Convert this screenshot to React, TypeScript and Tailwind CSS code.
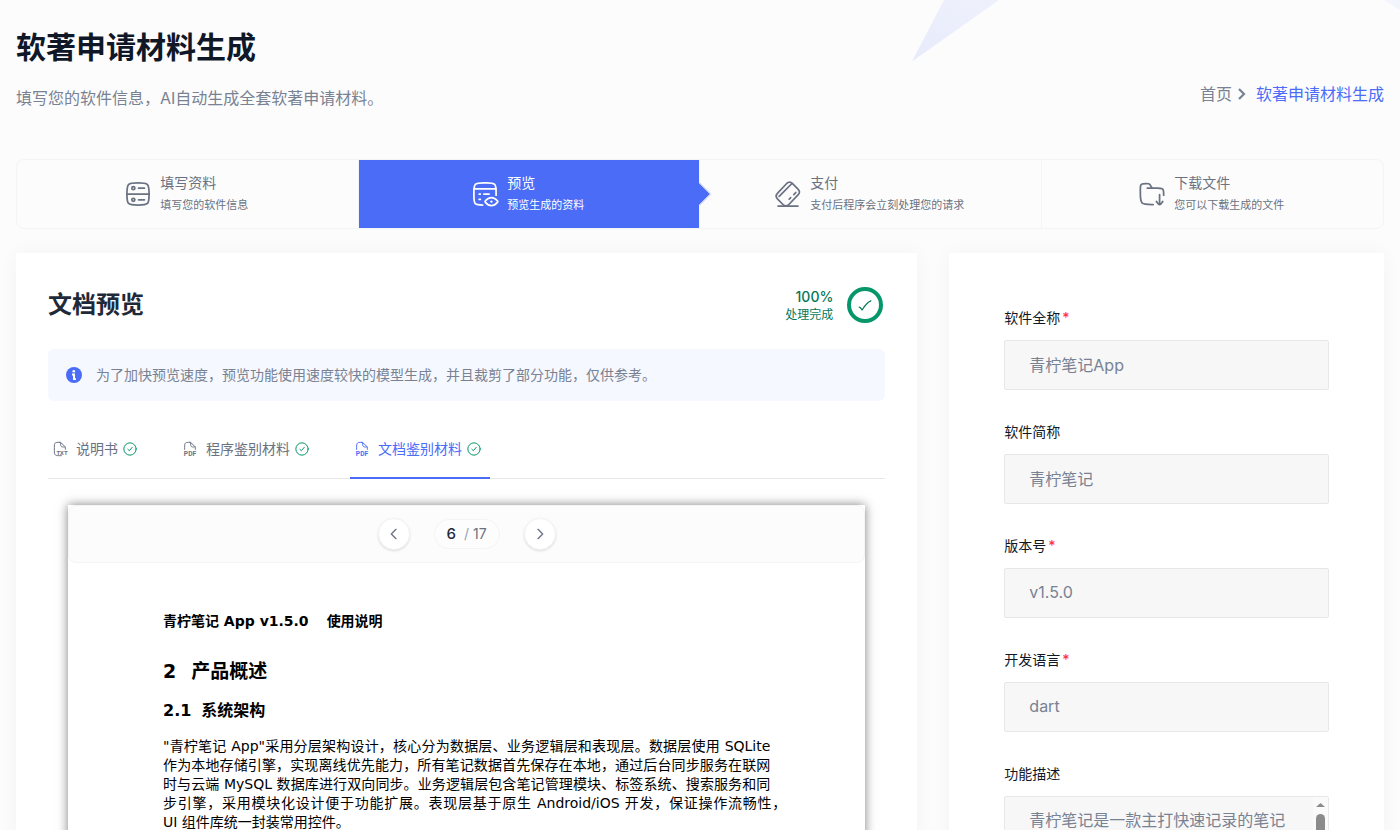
import type { ReactNode } from "react";
import clsx from "clsx";

interface IconProps {
  className?: string;
  children: ReactNode;
}

function Icon({ className, children }: IconProps) {
  return (
    <svg
      viewBox="0 0 24 24"
      fill="none"
      stroke="currentColor"
      strokeWidth="1.5"
      strokeLinecap="round"
      strokeLinejoin="round"
      aria-hidden="true"
      className={clsx("shrink-0", className)}
    >
      {children}
    </svg>
  );
}

const steps = [
  {
    title: "填写资料",
    desc: "填写您的软件信息",
    icon: (
      <>
        <path d="M2.5 12c0-4.478 0-6.718 1.391-8.109S7.521 2.5 12 2.5s6.718 0 8.109 1.391S21.5 7.521 21.5 12s0 6.718-1.391 8.109S16.479 21.5 12 21.5s-6.718 0-8.109-1.391S2.5 16.479 2.5 12Z" />
        <path d="M2.5 12h19M12.5 7h5M12.5 17h5" />
        <circle cx="8" cy="7" r="1.3" />
        <circle cx="8" cy="17" r="1.3" />
      </>
    ),
  },
  {
    title: "预览",
    desc: "预览生成的资料",
    active: true,
    icon: (
      <>
        <path d="M21.5 13v-2.5c0-3.771 0-5.657-1.245-6.828C19.009 2.5 17.005 2.5 12.997 2.5h-1.994c-4.008 0-6.012 0-7.258 1.172C2.5 4.843 2.5 6.729 2.5 10.5v3c0 3.771 0 5.657 1.245 6.828C4.64 21.17 5.9 21.43 10 21.48" />
        <path d="M2.5 7.5h19M11 12h4.5M7 12h1M7 16.5h1" />
        <path d="M22.6 17.8c.27.33.4.49.4.7s-.13.37-.4.7c-.93 1.16-2.72 2.8-5.1 2.8s-4.17-1.64-5.1-2.8c-.27-.33-.4-.49-.4-.7s.13-.37.4-.7c.93-1.16 2.72-2.8 5.1-2.8s4.17 1.64 5.1 2.8Z" />
        <path d="M17.5 18.5h.01" strokeWidth="2" />
      </>
    ),
  },
  {
    title: "支付",
    desc: "支付后程序会立刻处理您的请求",
    icon: (
      <>
        <path d="M10.7 3.2c1.6-1.6 3.6-1.7 5.2-.1l4.7 4.7c1.6 1.6 1.6 3.4 0 5l-7.9 8.2c-1.6 1.6-3.4 1.6-5 0l-4.6-4.7c-1.6-1.6-1.6-3.5 0-5.1Z" />
        <path d="m4.4 14 11-11M17 12.5l1.7-1.8M13 16.5l1.3-1.3M3.5 22.3h17" />
      </>
    ),
  },
  {
    title: "下载文件",
    desc: "您可以下载生成的文件",
    icon: (
      <>
        <path d="M13 21h-1c-4.714 0-7.071 0-8.536-1.465C2 18.072 2 15.715 2 11V7.944c0-1.816 0-2.724.38-3.406A3 3 0 0 1 3.538 3.38C4.22 3 5.128 3 6.944 3 8.108 3 8.69 3 9.2 3.191c1.163.436 1.643 1.493 2.168 2.542L12 7" />
        <path d="M8 7h8.75c2.107 0 3.16 0 3.917.506a3 3 0 0 1 .827.827C22 9.09 22 10.143 22 12.25V13" />
        <path d="M18.5 12.5V21m0 0c-.6 0-2.2-1.8-2.7-2.6M18.5 21c.6 0 2.2-1.8 2.7-2.6" />
      </>
    ),
  },
];

const tabs = [
  { label: "说明书", ext: "TXT" },
  { label: "程序鉴别材料", ext: "PDF" },
  { label: "文档鉴别材料", ext: "PDF", active: true },
];

const fields = [
  { id: "fullName", label: "软件全称", value: "青柠笔记App", required: true },
  { id: "shortName", label: "软件简称", value: "青柠笔记" },
  { id: "version", label: "版本号", value: "v1.5.0", required: true },
  { id: "language", label: "开发语言", value: "dart", required: true },
];

const description =
  "青柠笔记是一款主打快速记录的笔记应用，支持文字、图片与语音等多种记录方式。用户可以通过标签整理内容，使用全文搜索快速定位笔记，并在多台设备之间保持同步。应用采用离线优先设计，没有网络时也能正常查看和编辑，联网后自动完成数据合并。";

const paragraph = [
  "\"青柠笔记 App\"采用分层架构设计，核心分为数据层、业务逻辑层和表现层。数据层使用 SQLite",
  "作为本地存储引擎，实现离线优先能力，所有笔记数据首先保存在本地，通过后台同步服务在联网",
  "时与云端 MySQL 数据库进行双向同步。业务逻辑层包含笔记管理模块、标签系统、搜索服务和同",
];

function FileIcon({ ext }: { ext: string }) {
  return (
    <Icon className="size-4">
      {ext === "TXT" ? (
        <path d="M14 22h-2.3c-3.4 0-5.1 0-6.3-.9a4 4 0 0 1-.7-.7C3.5 19.2 3.5 17.6 3.5 14.5V10c0-3.8 0-5.7 1.2-6.8C5.8 2 7.7 2 11.5 2" />
      ) : (
        <path d="M4 12.5V9.456c0-3.245 0-4.868.886-5.967a4 4 0 0 1 .603-.603C6.588 2 8.211 2 11.456 2" />
      )}
      <path d="M11.456 2c.705 0 1.058 0 1.381.115.067.024.133.051.197.082.31.148.56.397 1.058.896l4.736 4.736c.579.578.868.867 1.02 1.234.152.368.152.777.152 1.594V12.5" />
      <path d="M13 2.5V3c0 2.828 0 4.243.879 5.121C14.757 9 16.172 9 19 9h.5" />
      <text
        x={ext === "TXT" ? 15 : 12}
        y={ext === "TXT" ? 20.5 : 22}
        textAnchor="middle"
        fontFamily="Roboto, sans-serif"
        fontSize={ext === "TXT" ? 9 : 10}
        fontWeight="700"
        fill="currentColor"
        stroke="none"
      >
        {ext}
      </text>
    </Icon>
  );
}

function StepBar() {
  return (
    <ol className="grid grid-cols-4 divide-x divide-gray-100 rounded-lg border border-gray-100">
      {steps.map((step) => (
        <li
          key={step.title}
          className={clsx(
            "relative flex h-[68px] items-center justify-center gap-2 pr-0.5",
            step.active ? "bg-[#4a6cf7] text-white" : "text-gray-500"
          )}
        >
          <Icon className="size-7">{step.icon}</Icon>
          <div className="pb-0.5">
            <p className="text-sm leading-6">{step.title}</p>
            <p className="text-[11px] leading-5">{step.desc}</p>
          </div>
          {step.active && (
            <span className="absolute top-1/2 -right-[9px] size-4 -translate-y-1/2 rotate-45 border-t border-r border-gray-100 bg-[#4a6cf7]" />
          )}
        </li>
      ))}
    </ol>
  );
}

function Tabs() {
  return (
    <div role="tablist" className="mt-6 flex gap-8 shadow-[inset_0_-1px_0_#e5e7eb]">
      {tabs.map((tab) => (
        <button
          key={tab.label}
          type="button"
          role="tab"
          aria-selected={!!tab.active}
          className={clsx(
            "border-b-2 pr-2 pb-1 pl-1 text-sm",
            tab.active ? "border-[#4a6cf7] text-[#4a6cf7]" : "border-transparent text-gray-500"
          )}
        >
          <span className="flex h-12 items-center">
            <FileIcon ext={tab.ext} />
            <span className="mr-1 ml-2">{tab.label}</span>
            <Icon className="size-4 text-[#059669]">
              <circle cx="12" cy="12" r="9.25" />
              <path d="M8.8 12.4l2.2 2.2 4.3-5" />
            </Icon>
          </span>
        </button>
      ))}
    </div>
  );
}

function DocumentPage() {
  return (
    <div className="mx-5 mt-[26px] bg-white shadow-[0_0_10px_rgba(0,0,0,0.5)]">
      <div className="flex h-[58px] items-center justify-center gap-6 rounded-lg border border-gray-100 bg-[#fcfcfc]">
        <button
          type="button"
          aria-label="上一页"
          className="flex size-8 items-center justify-center rounded-full border border-gray-100 bg-white text-gray-500 shadow-sm"
        >
          <Icon className="size-4">
            <path d="M15 5l-7 7 7 7" strokeWidth="2" />
          </Icon>
        </button>
        <div className="flex h-[30px] items-center rounded-full border border-gray-100 bg-[#fdfdfd] px-3 text-sm text-gray-500">
          <span className="text-[15px] font-medium text-gray-800">6</span>
          <span className="mr-1 ml-2 text-gray-400">/</span>
          <span>17</span>
        </div>
        <button
          type="button"
          aria-label="下一页"
          className="flex size-8 items-center justify-center rounded-full border border-gray-100 bg-white text-gray-500 shadow-sm"
        >
          <Icon className="size-4">
            <path d="M9 5l7 7-7 7" strokeWidth="2" />
          </Icon>
        </button>
      </div>
      <article className="px-[95px] pt-12 pb-24 font-['DejaVu_Sans','Noto_Sans_CJK_SC',sans-serif] text-black">
        <p className="flex gap-[18px] text-sm font-bold">
          <span>青柠笔记 App v1.5.0</span>
          <span>使用说明</span>
        </p>
        <h3 className="mt-6 flex gap-[15px] text-[19px] leading-8 font-bold">
          <span>2</span>
          <span>产品概述</span>
        </h3>
        <h4 className="mt-3 flex gap-[10px] text-base leading-6 font-bold">
          <span>2.1</span>
          <span>系统架构</span>
        </h4>
        <p className="mt-[14px] text-sm leading-[19px]">
          {paragraph.map((line) => (
            <span key={line} className="block [text-align-last:justify]">
              {line}
            </span>
          ))}
          <span className="-mr-4 block [text-align-last:justify]">
            步引擎，采用模块化设计便于功能扩展。表现层基于原生 Android/iOS 开发，保证操作流畅性，
          </span>
          <span className="block">UI 组件库统一封装常用控件。</span>
        </p>
      </article>
    </div>
  );
}

function Preview() {
  return (
    <section className="col-span-2 bg-white p-8 shadow-[0_0_20px_rgba(0,0,0,0.04)]">
      <div className="flex items-center justify-between">
        <h2 className="text-2xl font-bold text-gray-800">文档预览</h2>
        <div className="flex items-center gap-3 text-[#047857]">
          <div className="pt-1 text-right">
            <p className="text-sm leading-4 font-medium">100%</p>
            <p className="text-xs leading-5">处理完成</p>
          </div>
          <div className="flex size-10 items-center justify-center">
            <span className="flex size-9 items-center justify-center rounded-full border-4 border-[#059669]">
              <Icon className="size-5">
                <path d="M5 14.5s1.5 0 3.5 3.5c0 0 5.559-9.167 10.5-11" />
              </Icon>
            </span>
          </div>
        </div>
      </div>
      <div className="mt-6 flex items-center gap-3 rounded-md bg-[#f5f8ff] p-4 text-sm text-[#788293]">
        <svg viewBox="0 0 20 20" className="size-5 shrink-0" aria-hidden="true">
          <circle cx="10" cy="10" r="8" fill="#4a6cf7" />
          <circle cx="9.8" cy="6.2" r="1.3" fill="#fff" />
          <path d="M8 8.6h3v4.600h1v1.800H9v-4.600H8z" fill="#fff" />
        </svg>
        <p>为了加快预览速度，预览功能使用速度较快的模型生成，并且裁剪了部分功能，仅供参考。</p>
      </div>
      <Tabs />
      <DocumentPage />
    </section>
  );
}

function InfoForm() {
  return (
    <form className="flex flex-col gap-8 bg-white p-[55px] shadow-[0_0_20px_rgba(0,0,0,0.04)]">
      {fields.map((field) => (
        <div key={field.id}>
          <label htmlFor={field.id} className="mb-3 block text-sm text-gray-900">
            {field.label}
            {field.required && <span className="ml-[2px] font-medium text-[#ff3344]">*</span>}
          </label>
          <input
            id={field.id}
            type="text"
            readOnly
            defaultValue={field.value}
            className="block h-[50px] w-full rounded-xs border border-gray-200 bg-[#f7f7f7] px-6 pb-0.5 text-base text-[#788293] outline-none"
          />
        </div>
      ))}
      <div>
        <label htmlFor="description" className="mb-3 block text-sm text-gray-900">
          功能描述
        </label>
        <div className="flex rounded-xs border border-gray-200 bg-[#f7f7f7]">
          <textarea
            id="description"
            readOnly
            rows={5}
            defaultValue={description}
            className="block min-w-0 flex-1 resize-none overflow-y-auto py-[11px] pr-6 pl-6 text-base text-[#788293] outline-none [scrollbar-width:none]"
          />
          <div className="flex w-[15px] flex-col items-center bg-[#fafafa] pt-1.5" aria-hidden="true">
            <svg viewBox="0 0 9 4" className="h-1 w-[9px]">
              <path d="M0 4L4.500 0L9 4z" fill="#8b8b8b" />
            </svg>
            <span className="mt-[7px] h-16 w-[9px] rounded-full bg-[#8b8b8b]" />
          </div>
        </div>
      </div>
    </form>
  );
}

export default function App() {
  return (
    <div className="relative h-screen overflow-hidden bg-[#fcfcfc] font-[Inter,'Noto_Sans_CJK_SC',sans-serif]">
      <svg
        viewBox="0 0 488 62"
        className="absolute top-0 right-0 h-[62px] w-[488px]"
        aria-hidden="true"
      >
        <defs>
          <linearGradient id="beam" x1="0" y1="1" x2="0.6" y2="0">
            <stop stopColor="#4a6cf7" stopOpacity="0.12" />
            <stop offset="1" stopColor="#4a6cf7" stopOpacity="0.08" />
          </linearGradient>
        </defs>
        <path d="M32 0h55L0 61.500z" fill="url(#beam)" />
        <path d="M472 0h16v10z" fill="#4a6cf7" fillOpacity="0.05" />
      </svg>
      <main className="relative px-4 pt-[27px]">
        <div className="flex items-center justify-between">
          <div>
            <h1 className="text-3xl leading-10 font-bold text-gray-900">软著申请材料生成</h1>
            <p className="mt-[17px] text-base leading-7 text-[#788293]">
              填写您的软件信息，AI自动生成全套软著申请材料。
            </p>
          </div>
          <nav className="flex items-center self-end pb-1.5 text-base text-[#788293]">
            <a href="#">首页</a>
            <svg viewBox="0 0 24 24" className="size-6" aria-hidden="true">
              <path d="M7 7l5 5-5 5" fill="none" stroke="currentColor" strokeWidth="2.2" />
            </svg>
            <a href="#" className="text-[#4a6cf7]">
              软著申请材料生成
            </a>
          </nav>
        </div>
        <div className="mt-[47px]">
          <StepBar />
        </div>
        <div className="mt-6 grid grid-cols-3 gap-8">
          <Preview />
          <InfoForm />
        </div>
      </main>
    </div>
  );
}
